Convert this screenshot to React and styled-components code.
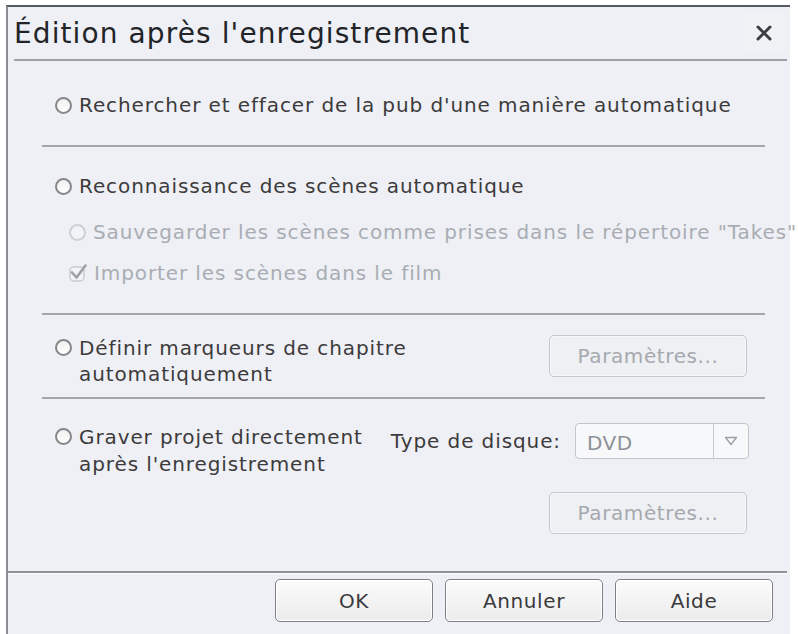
import React from 'react';
import styled, { createGlobalStyle } from 'styled-components';

const Global = createGlobalStyle`
  html, body { margin: 0; padding: 0; background: #ffffff; }
  body { font-family: "DejaVu Sans", "Open Sans", sans-serif; overflow: hidden; }
`;

const Window = styled.div`
  margin: 5px 0 0 6px;
  width: 784px;
  height: 629px;
  box-sizing: border-box;
  background: #eef0f5;
  border-top: 2px solid #555a60;
  border-left: 2px solid #8a8d92;
  display: flex;
  flex-direction: column;
`;

const TitleBar = styled.div`
  display: flex;
  align-items: center;
  justify-content: space-between;
  height: 52px;
  margin: 0 3px 0 6px;
  border-bottom: 2px solid #9ea2a8;
`;

const Title = styled.h1`
  margin: 0;
  font-size: 28px;
  font-weight: 400;
  color: #222427;
  letter-spacing: 1.1px;
`;

const CloseBox = styled.div`
  width: 42px;
  height: 40px;
  display: flex;
  align-items: center;
  justify-content: center;
  background: #f0f2f6;
  margin-right: 2px;
`;

const Body = styled.div`
  flex: 1;
  padding: 0 25px 0 34px;
`;

const Section = styled.div`
  padding: ${p => p.$pad};
  border-bottom: ${p => (p.$last ? 'none' : '2px solid #a2a5aa')};
`;

const Row = styled.div`
  display: flex;
  align-items: flex-start;
  justify-content: space-between;
`;

const Option = styled.label`
  display: flex;
  align-items: flex-start;
  gap: 7px;
  padding-left: ${p => (p.$sub ? '27px' : '13px')};
  margin-top: ${p => p.$mt || '0px'};
  font-size: 20px;
  line-height: ${p => p.$lh || '25px'};
  letter-spacing: 0.9px;
  color: ${p => (p.$disabled ? '#a9adb3' : '#3d3b3c')};
  white-space: nowrap;
`;

const RadioDot = styled.span`
  flex: none;
  width: 17px;
  height: 17px;
  margin-top: 4px;
  border-radius: 50%;
  box-sizing: border-box;
  border: 2px solid ${p => (p.$disabled ? '#cdd0d4' : '#85878b')};
  background: ${p => (p.$disabled ? '#f3f4f7' : 'linear-gradient(#f0f0f0, #ffffff)')};
`;

const CheckWrap = styled.span`
  flex: none;
  width: 18px;
  height: 20px;
  margin-top: 2px;
  display: flex;
`;

const Lines = styled.span`
  display: flex;
  flex-direction: column;
`;

const PlainButton = styled.button`
  font-family: inherit;
  font-size: 20px;
  letter-spacing: 0.6px;
  color: ${p => (p.$disabled ? '#a6a9ae' : '#3a3a3c')};
  width: ${p => p.$w || '198px'};
  height: ${p => p.$h || '42px'};
  border-radius: 5px;
  border: 1px solid ${p => (p.$disabled ? '#c4c7cc' : '#7d8085')};
  background: ${p => (p.$disabled ? '#eef0f4' : 'linear-gradient(#fbfbfb, #ececee)')};
  box-shadow: inset 0 0 0 1px ${p => (p.$disabled ? '#f6f7f9' : '#ffffff')};
  padding: 0;
  cursor: default;
`;

const RightCol = styled.div`
  display: flex;
  flex-direction: column;
  align-items: flex-end;
  gap: 33px;
`;

const DiscRow = styled.div`
  display: flex;
  align-items: center;
  gap: 14px;
  margin-top: -1px;
  margin-right: -2px;
`;

const FieldLabel = styled.span`
  font-size: 20px;
  letter-spacing: 0.9px;
  color: #3d3b3c;
  white-space: nowrap;
`;

const Select = styled.div`
  width: 174px;
  height: 36px;
  box-sizing: border-box;
  border: 1px solid #c2c5ca;
  border-radius: 4px;
  background: #f7f8fa;
  display: flex;
  align-items: stretch;
`;

const SelectValue = styled.span`
  flex: 1;
  display: flex;
  align-items: center;
  padding: 3px 0 0 11px;
  font-size: 20px;
  letter-spacing: 0.5px;
  color: #8d9096;
`;

const SelectArrow = styled.span`
  width: 34px;
  border-left: 1px solid #c8cbd0;
  display: flex;
  align-items: center;
  justify-content: center;
`;

const Footer = styled.div`
  height: 55px;
  border-top: 2px solid #8e9196;
  margin-right: 3px;
  display: flex;
  justify-content: flex-end;
  align-items: flex-start;
  gap: 12px;
  padding: 6px 14px 0 0;
  box-shadow: inset 0 1px 0 #ffffff;
`;

const Radio = ({ disabled, children, sub, mt, lh }) => (
  <Option $disabled={disabled} $sub={sub} $mt={mt} $lh={lh}>
    <RadioDot $disabled={disabled} />
    <Lines>{children}</Lines>
  </Option>
);

const CheckMark = () => (
  <CheckWrap>
    <svg width="18" height="20" viewBox="0 0 18 20">
      <rect x="1" y="4" width="14" height="14" rx="4" fill="#f3f4f7" stroke="#c8cbd0" strokeWidth="1.5" />
      <path d="M3 9.5 L7.5 14.5 L16.5 2.5" fill="none" stroke="#9ca0a7" strokeWidth="2.6" strokeLinejoin="round" strokeLinecap="round" />
    </svg>
  </CheckWrap>
);

const App = () => (
  <React.Fragment>
    <Global />
    <Window>
      <TitleBar>
        <Title>Édition après l'enregistrement</Title>
        <CloseBox>
          <svg width="16" height="16" viewBox="0 0 16 16">
            <path d="M2 2 L14 14 M14 2 L2 14" stroke="#3a3d42" strokeWidth="3" strokeLinecap="round" />
          </svg>
        </CloseBox>
      </TitleBar>
      <Body>
        <Section $pad="32px 0 27px">
          <Radio>Rechercher et effacer de la pub d'une manière automatique</Radio>
        </Section>
        <Section $pad="27px 0 27px">
          <Radio>Reconnaissance des scènes automatique</Radio>
          <Radio disabled sub mt="21px">Sauvegarder les scènes comme prises dans le répertoire "Takes"</Radio>
          <Option $disabled $sub $mt="16px">
            <CheckMark />
            <Lines>Importer les scènes dans le film</Lines>
          </Option>
        </Section>
        <Section $pad="20px 18px 10px 0">
          <Row>
            <Radio lh="26px">
              <span>Définir marqueurs de chapitre</span>
              <span>automatiquement</span>
            </Radio>
            <PlainButton $disabled>Paramètres...</PlainButton>
          </Row>
        </Section>
        <Section $last $pad="25px 18px 0 0">
          <Row>
            <Radio lh="27px">
              <span>Graver projet directement</span>
              <span>après l'enregistrement</span>
            </Radio>
            <RightCol>
              <DiscRow>
                <FieldLabel>Type de disque:</FieldLabel>
                <Select>
                  <SelectValue>DVD</SelectValue>
                  <SelectArrow>
                    <svg width="14" height="10" viewBox="0 0 14 10">
                      <path d="M1.5 1.5 H12.5 L7 8.5 Z" fill="none" stroke="#9a9ea4" strokeWidth="1.3" strokeLinejoin="round" />
                    </svg>
                  </SelectArrow>
                </Select>
              </DiscRow>
              <PlainButton $disabled>Paramètres...</PlainButton>
            </RightCol>
          </Row>
        </Section>
      </Body>
      <Footer>
        <PlainButton $w="158px" $h="43px">OK</PlainButton>
        <PlainButton $w="158px" $h="43px">Annuler</PlainButton>
        <PlainButton $w="158px" $h="43px">Aide</PlainButton>
      </Footer>
    </Window>
  </React.Fragment>
);

export default App;
